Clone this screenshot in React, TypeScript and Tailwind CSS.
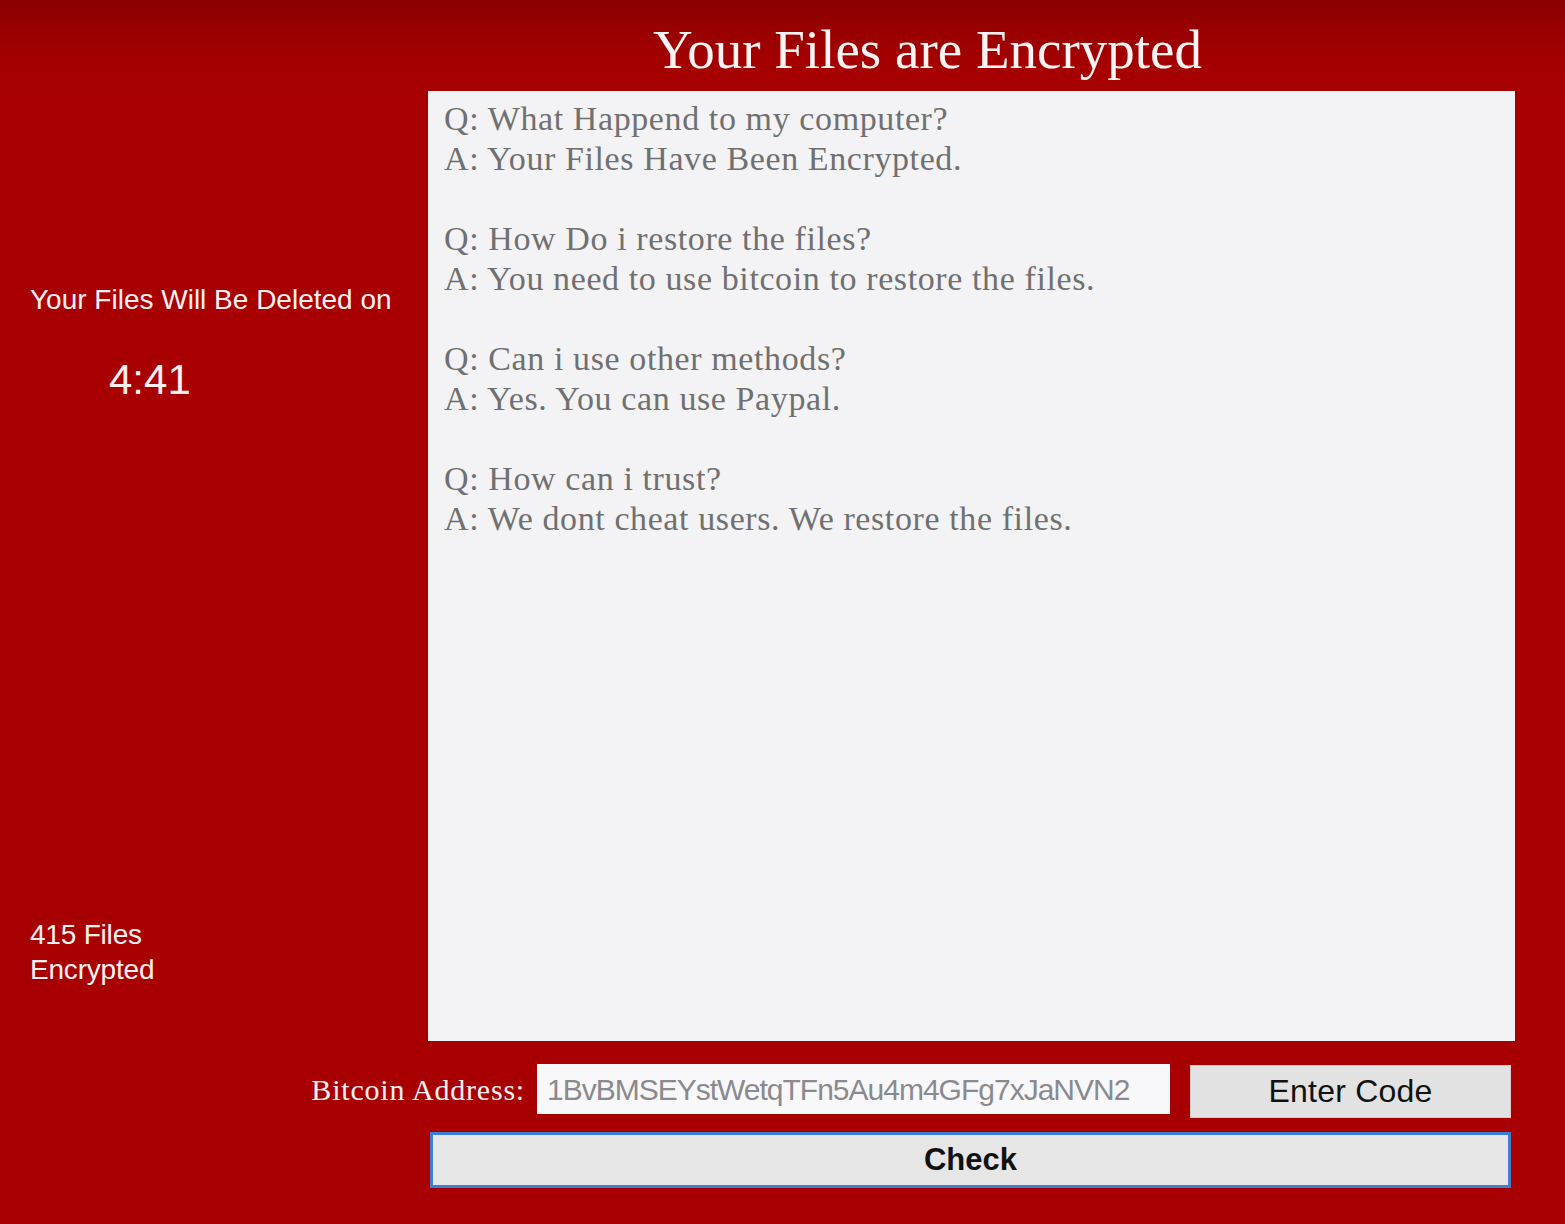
import React from "react";

const serif = { fontFamily: '"Liberation Serif", "Times New Roman", serif' };
const sans = { fontFamily: '"Liberation Sans", Arial, sans-serif' };

const lines: string[] = [
  "Q: What Happend to my computer?",
  "A: Your Files Have Been Encrypted.",
  "",
  "Q: How Do i restore the files?",
  "A: You need to use bitcoin to restore the files.",
  "",
  "Q: Can i use other methods?",
  "A: Yes. You can use Paypal.",
  "",
  "Q: How can i trust?",
  "A: We dont cheat users. We restore the files.",
];

export default function App() {
  return (
    <div className="w-[1565px] h-[1224px] overflow-hidden bg-[linear-gradient(to_bottom,#8c0000_0px,#a50000_60px,#a80000_100px,#a80000_100%)] flex flex-col">
      <div className="h-[91px] flex items-start pl-[653px] pt-[20px]">
        <h1 className="text-[55px] leading-[60px] text-[#fff3f3]" style={serif}>
          Your Files are Encrypted
        </h1>
      </div>
      <div className="flex">
        <div className="w-[428px] h-[950px] flex flex-col pl-[30px]" style={sans}>
          <div className="mt-[192px] text-[28px] leading-[34px] text-[#fff0f0]">
            Your Files Will Be Deleted on
          </div>
          <div className="mt-[39px] ml-[79px] text-[42px] leading-[48px] text-[#fff0f0]">4:41</div>
          <div className="mt-[513px] text-[28px] leading-[35px] text-[#fff0f0] tracking-[-0.2px]">
            415 Files
            <br />
            Encrypted
          </div>
        </div>
        <div className="w-[1087px] h-[950px] bg-[#f3f3f5] pl-[16px] pt-[8px] text-[34px] leading-[40px] text-[#707070]" style={serif}>
          {lines.map((l, i) => (
            <div key={i} className="h-[40px] whitespace-pre tracking-[0.6px]">
              {l}
            </div>
          ))}
        </div>
      </div>
      <div className="flex items-center mt-[22px] h-[52px]">
        <div className="w-[525px] text-right text-[30px] text-[#fff0f0] tracking-[0.8px]" style={serif}>
          Bitcoin Address:
        </div>
        <div
          className="ml-[12px] w-[633px] h-[50px] bg-[#f8f8fa] flex items-center pl-[10px] text-[30px] text-[#8a8a8e] tracking-[-1px]"
          style={sans}
        >
          1BvBMSEYstWetqTFn5Au4m4GFg7xJaNVN2
        </div>
        <button
          className="ml-[20px] w-[321px] h-[53px] mt-[4px] bg-[#e2e2e2] border border-[#d0d0d0] text-[32px] text-[#111] tracking-[0.2px] flex items-center justify-center"
          style={sans}
        >
          Enter Code
        </button>
      </div>
      <div className="mt-[17px] ml-[430px]">
        <button
          className="w-[1081px] h-[56px] bg-[#e6e6e6] border-[3px] border-[#3d7fd6] text-[31px] font-bold text-[#111] flex items-center justify-center"
          style={sans}
        >
          Check
        </button>
      </div>
    </div>
  );
}
